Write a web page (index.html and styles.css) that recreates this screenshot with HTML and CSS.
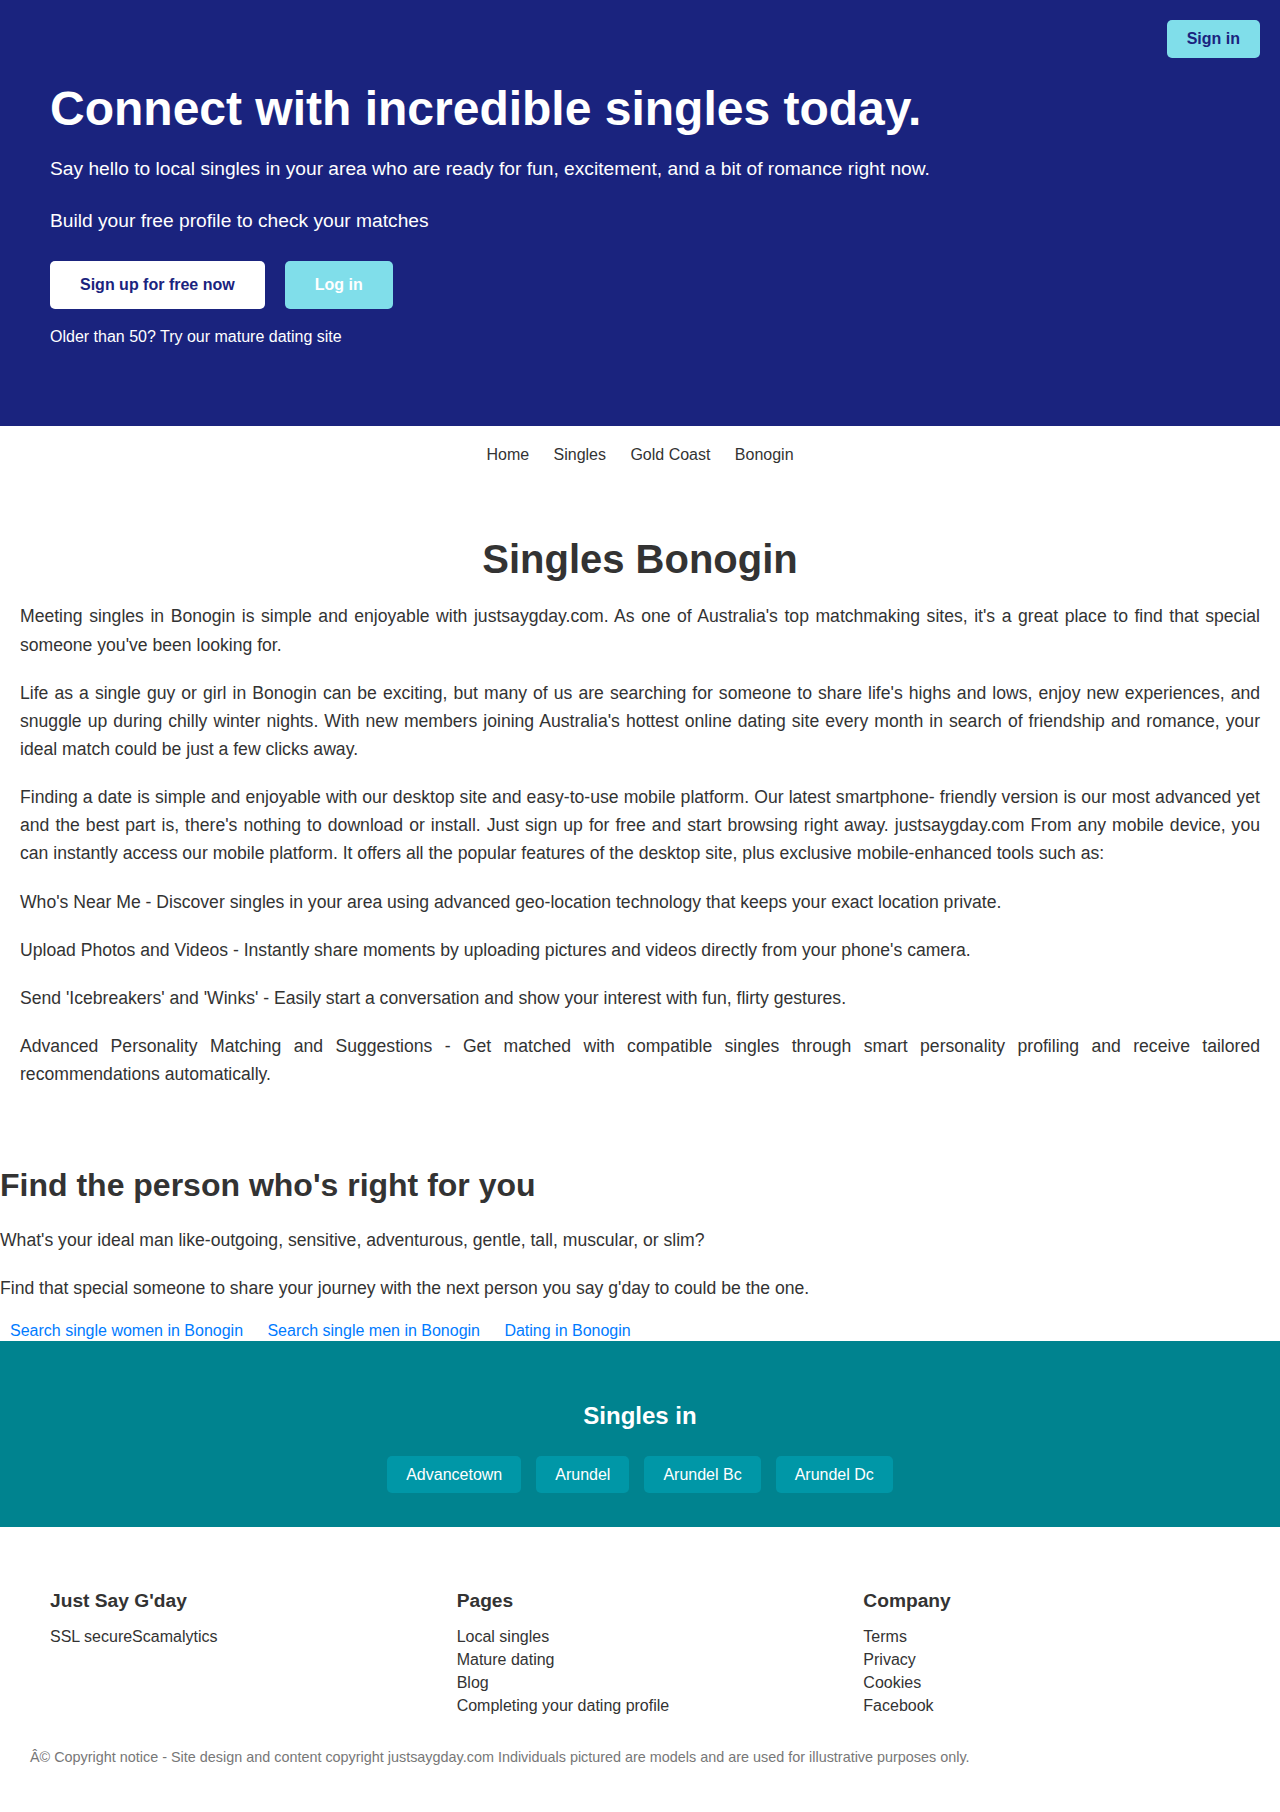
FILE: index.html
```html
<!DOCTYPE html>
<html lang="en">
<head>
<meta charset="utf-8">
<title>Singles Bonogin</title>
<link rel="stylesheet" href="styles.css">
</head>
<body>
<header class="hero">
  <a class="signin" href="#">Sign in</a>
  <h1 class="hero-title">Connect with incredible singles today.</h1>
  <p class="hero-lead">Say hello to local singles in your area who are ready for fun, excitement, and a bit of romance right now.</p>
  <p class="hero-lead hero-lead-2">Build your free profile to check your matches</p>
  <div class="hero-actions">
    <a class="btn btn-white" href="#">Sign up for free now</a>
    <a class="btn btn-cyan" href="#">Log in</a>
  </div>
  <p class="hero-mature">Older than 50? Try our mature dating site</p>
</header>

<nav class="crumbs">
  <a href="#">Home</a>
  <a href="#">Singles</a>
  <a href="#">Gold Coast</a>
  <a href="#">Bonogin</a>
</nav>

<section class="intro">
  <h2 class="intro-title">Singles Bonogin</h2>
  <p>Meeting singles in Bonogin is simple and enjoyable with justsaygday.com. As one of Australia's top matchmaking sites, it's a great place to find that special someone you've been looking for.</p>
  <p>Life as a single guy or girl in Bonogin can be exciting, but many of us are searching for someone to share life's highs and lows, enjoy new experiences, and snuggle up during chilly winter nights. With new members joining Australia's hottest online dating site every month in search of friendship and romance, your ideal match could be just a few clicks away.</p>
  <p>Finding a date is simple and enjoyable with our desktop site and easy-to-use mobile platform. Our latest smartphone- friendly version is our most advanced yet and the best part is, there's nothing to download or install. Just sign up for free and start browsing right away. justsaygday.com From any mobile device, you can instantly access our mobile platform. It offers all the popular features of the desktop site, plus exclusive mobile-enhanced tools such as:</p>
  <p>Who's Near Me - Discover singles in your area using advanced geo-location technology that keeps your exact location private.</p>
  <p>Upload Photos and Videos - Instantly share moments by uploading pictures and videos directly from your phone's camera.</p>
  <p>Send 'Icebreakers' and 'Winks' - Easily start a conversation and show your interest with fun, flirty gestures.</p>
  <p>Advanced Personality Matching and Suggestions - Get matched with compatible singles through smart personality profiling and receive tailored recommendations automatically.</p>
</section>

<section class="find">
  <h2 class="find-title">Find the person who's right for you</h2>
  <p>What's your ideal man like-outgoing, sensitive, adventurous, gentle, tall, muscular, or slim?</p>
  <p>Find that special someone to share your journey with the next person you say g'day to could be the one.</p>
  <div class="find-links">
    <a href="#">Search single women in Bonogin</a>
    <a href="#">Search single men in Bonogin</a>
    <a href="#">Dating in Bonogin</a>
  </div>
</section>

<section class="nearby">
  <h3 class="nearby-title">Singles in</h3>
  <div class="nearby-list">
    <a class="chip" href="#">Advancetown</a>
    <a class="chip" href="#">Arundel</a>
    <a class="chip" href="#">Arundel Bc</a>
    <a class="chip" href="#">Arundel Dc</a>
  </div>
</section>

<footer class="footer">
  <div class="footer-cols">
    <div class="footer-col">
      <h4 class="footer-head">Just Say G'day</h4>
      <span class="footer-text">SSL secureScamalytics</span>
    </div>
    <div class="footer-col">
      <h4 class="footer-head">Pages</h4>
      <a href="#">Local singles</a>
      <a href="#">Mature dating</a>
      <a href="#">Blog</a>
      <a href="#">Completing your dating profile</a>
    </div>
    <div class="footer-col">
      <h4 class="footer-head">Company</h4>
      <a href="#">Terms</a>
      <a href="#">Privacy</a>
      <a href="#">Cookies</a>
      <a href="#">Facebook</a>
    </div>
  </div>
  <p class="copyright">Â© Copyright notice - Site design and content copyright justsaygday.com Individuals pictured are models and are used for illustrative purposes only.</p>
</footer>
</body>
</html>
```

FILE: styles.css
```css
* { box-sizing: border-box; }

body {
  margin: 0;
  font-family: "Liberation Sans", Arial, Helvetica, sans-serif;
  color: #333;
  background: #fff;
}

a { text-decoration: none; }

/* HERO */
.hero {
  position: relative;
  background: #1a237e;
  color: #fff;
  padding: 80px 50px 80px;
}

.signin {
  position: absolute;
  top: 20px;
  right: 20px;
  background: #80deea;
  color: #1a237e;
  font-weight: bold;
  font-size: 16px;
  line-height: 18px;
  padding: 10px 20px;
  border-radius: 5px;
}

.hero-title {
  margin: 0;
  font-size: 48px;
  line-height: 57.6px;
  font-weight: bold;
}

.hero-lead {
  margin: 16px 0 0;
  font-size: 19.2px;
  line-height: 30px;
}

.hero-lead-2 { margin-top: 22px; }

.hero-actions {
  display: flex;
  gap: 20px;
  margin-top: 25px;
}

.btn {
  display: inline-block;
  font-size: 16px;
  font-weight: bold;
  line-height: 18px;
  padding: 15px 30px;
  border-radius: 5px;
}

.btn-white { background: #fff; color: #1a237e; }
.btn-cyan { background: #80deea; color: #fff; }

.hero-mature {
  margin: 19px 0 0;
  font-size: 16px;
  line-height: 18.4px;
}

/* NAV */
.crumbs {
  display: flex;
  justify-content: center;
  gap: 24.4px;
  padding: 20px 0;
  font-size: 16px;
  line-height: 18.4px;
}

.crumbs a { color: #333; }

/* INTRO */
.intro {
  padding: 52px 20px 39px;
}

.intro-title {
  margin: 0 0 20px;
  text-align: center;
  font-size: 40px;
  line-height: 46px;
  color: #333;
}

.intro p {
  margin: 0 0 20px;
  font-size: 17.6px;
  line-height: 1.6;
  text-align: justify;
}

/* FIND */
.find {
  padding: 20px 0 0;
}

.find-title {
  margin: 0 0 22px;
  font-size: 32px;
  line-height: 36.8px;
  color: #333;
}

.find p {
  margin: 0 0 20px;
  font-size: 17.6px;
  line-height: 1.6;
}

.find-links {
  display: flex;
  gap: 24.4px;
  padding-left: 10px;
  font-size: 16px;
  line-height: 18.4px;
}

.find-links a { color: #007bff; }

/* NEARBY */
.nearby {
  background: #00838f;
  padding: 61px 0 34px;
  text-align: center;
}

.nearby-title {
  margin: 0 0 27px;
  font-size: 24px;
  line-height: 27.6px;
  color: #fff;
}

.nearby-list {
  display: flex;
  justify-content: center;
  gap: 15px;
}

.chip {
  background: #0097a7;
  color: #fff;
  font-size: 16px;
  line-height: 19px;
  padding: 9px 19px;
  border-radius: 5px;
}

/* FOOTER */
.footer {
  padding: 63px 0 46px;
}

.footer-cols {
  display: grid;
  grid-template-columns: repeat(3, 1fr);
  gap: 40px;
  padding: 0 50px;
}

.footer-col {
  display: flex;
  flex-direction: column;
  align-items: flex-start;
}

.footer-head {
  margin: 0 0 13px;
  font-size: 19.2px;
  line-height: 22px;
  color: #333;
}

.footer-col a,
.footer-text {
  color: #333;
  font-size: 16px;
  line-height: 23px;
}

.copyright {
  margin: 32px 0 0;
  padding: 0 30px;
  font-size: 14.4px;
  line-height: 16px;
  color: #777;
}
```
